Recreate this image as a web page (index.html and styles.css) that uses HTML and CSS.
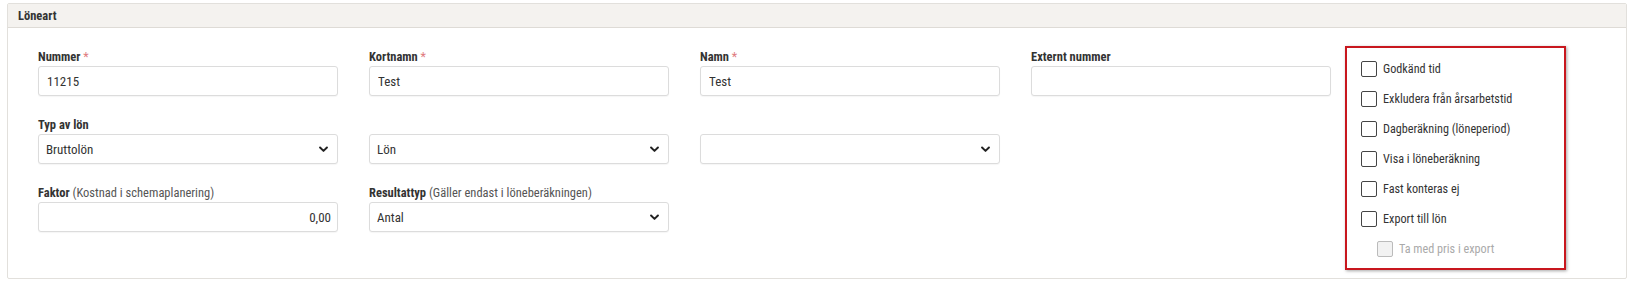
FILE: index.html
```html
<!DOCTYPE html>
<html lang="sv">

<head>
    <meta charset="UTF-8">
    <title>Löneart</title>
    <link rel="stylesheet" href="styles.css">
</head>

<body>
    <div class="panel">
        <div class="panel-heading">Löneart</div>
        <div class="panel-body">
            <div class="fields">
                <div class="field">
                    <label>Nummer <span class="req">*</span></label>
                    <input type="text" value="11215">
                </div>
                <div class="field">
                    <label>Kortnamn <span class="req">*</span></label>
                    <input type="text" value="Test">
                </div>
                <div class="field">
                    <label>Namn <span class="req">*</span></label>
                    <input type="text" value="Test">
                </div>
                <div class="field">
                    <label>Externt nummer</label>
                    <input type="text" value="">
                </div>

                <div class="field">
                    <label>Typ av lön</label>
                    <div class="select-wrap">
                        <select><option>Bruttolön</option></select>
                        <svg class="chevron" viewBox="0 0 10 7"><path d="M1.2 1.3 L5 5 L8.8 1.3" /></svg>
                    </div>
                </div>
                <div class="field">
                    <label>&nbsp;</label>
                    <div class="select-wrap">
                        <select><option>Lön</option></select>
                        <svg class="chevron" viewBox="0 0 10 7"><path d="M1.2 1.3 L5 5 L8.8 1.3" /></svg>
                    </div>
                </div>
                <div class="field">
                    <label>&nbsp;</label>
                    <div class="select-wrap">
                        <select><option></option></select>
                        <svg class="chevron" viewBox="0 0 10 7"><path d="M1.2 1.3 L5 5 L8.8 1.3" /></svg>
                    </div>
                </div>
                <div class="field"></div>

                <div class="field">
                    <label>Faktor <span class="hint">(Kostnad i schemaplanering)</span></label>
                    <input type="text" class="num" value="0,00">
                </div>
                <div class="field">
                    <label>Resultattyp <span class="hint">(Gäller endast i löneberäkningen)</span></label>
                    <div class="select-wrap">
                        <select><option>Antal</option></select>
                        <svg class="chevron" viewBox="0 0 10 7"><path d="M1.2 1.3 L5 5 L8.8 1.3" /></svg>
                    </div>
                </div>
            </div>

            <!-- markerad ruta med kryssrutor -->
            <div class="checks">
                <label class="check"><span class="box"></span>Godkänd tid</label>
                <label class="check"><span class="box"></span>Exkludera från årsarbetstid</label>
                <label class="check"><span class="box"></span>Dagberäkning (löneperiod)</label>
                <label class="check"><span class="box"></span>Visa i löneberäkning</label>
                <label class="check"><span class="box"></span>Fast konteras ej</label>
                <label class="check"><span class="box"></span>Export till lön</label>
                <label class="check sub disabled"><span class="box"></span>Ta med pris i export</label>
            </div>
        </div>
    </div>
</body>

</html>
```

FILE: styles.css
```css
body {
    margin: 3px 11px 0 7px;
    font-family: "Roboto", sans-serif;
    font-stretch: condensed;
    font-size: 12px;
    color: #333;
    background: #fff;
}
.panel {
    border: 1px solid #e2e0dc;
    border-radius: 2px;
}
.panel-heading {
    height: 23px;
    line-height: 23px;
    padding-left: 10px;
    background: #f4f2ef;
    border-bottom: 1px solid #dedbd6;
    font-weight: bold;
    font-size: 12.5px;
    color: #333;
}
.panel-body {
    display: flex;
    align-items: flex-start;
    padding: 18px 0 8px 30px;
}
.fields {
    display: grid;
    grid-template-columns: repeat(4, 300px);
    column-gap: 31px;
    row-gap: 21px;
    padding-top: 3px;
}
.field label {
    display: block;
    height: 15px;
    line-height: 15px;
    margin-bottom: 2px;
    font-weight: bold;
    font-size: 12.5px;
    white-space: nowrap;
}
.field .req {
    color: #e07b80;
    font-weight: normal;
}
.field .hint {
    font-weight: normal;
    color: #555;
}
.field input, .field select {
    display: block;
    width: 100%;
    height: 30px;
    box-sizing: border-box;
    padding: 0 8px;
    border: 1px solid #dcdcdc;
    border-radius: 3px;
    box-shadow: 0 1px 1px rgba(0, 0, 0, 0.04);
    background: #fff;
    font-family: inherit;
    font-stretch: condensed;
    font-size: 13px;
    color: #333;
    outline: none;
}
.field input.num {
    text-align: right;
    padding-right: 6px;
}
.select-wrap {
    position: relative;
}
.field select {
    appearance: none;
    -webkit-appearance: none;
    padding-left: 7px;
}
.chevron {
    position: absolute;
    right: 10px;
    top: 12px;
    width: 9px;
    height: 7px;
    fill: none;
    stroke: #222;
    stroke-width: 2.2;
    stroke-linecap: round;
    stroke-linejoin: round;
    pointer-events: none;
}
.checks {
    margin-left: 14px;
    width: 203px;
    padding: 6px 0 4px 14px;
    border: 2px solid #c8171e;
    box-shadow: 1px 1px 3px rgba(0, 0, 0, 0.35);
}
.check {
    display: flex;
    align-items: center;
    height: 30px;
    font-size: 12.2px;
    color: #333;
    white-space: nowrap;
}
.check .box {
    width: 14px;
    height: 14px;
    margin-right: 6px;
    border: 1px solid #444;
    border-radius: 2px;
    background: #fff;
}
.check.sub {
    padding-left: 16px;
}
.check.disabled {
    color: #aaa;
}
.check.disabled .box {
    border-color: #bbb;
    background: #f2f2f2;
}
```
